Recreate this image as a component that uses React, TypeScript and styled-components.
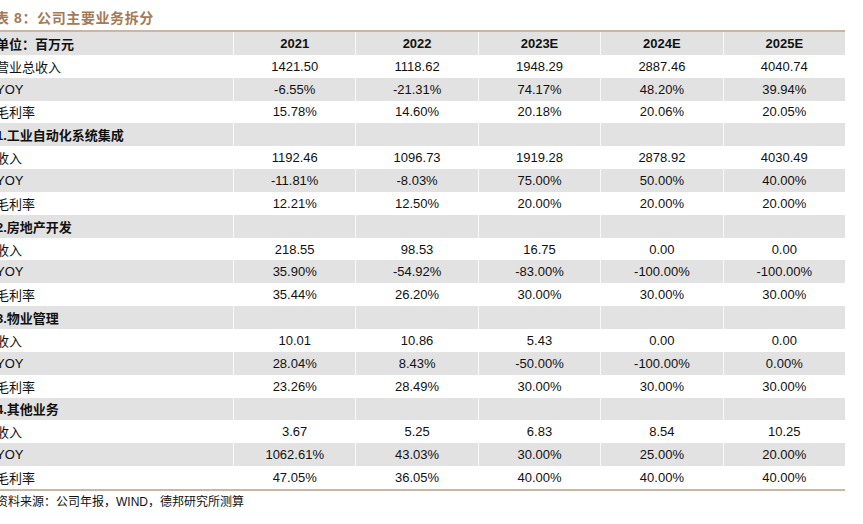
import React from "react";
import styled, { createGlobalStyle } from "styled-components";

const Global = createGlobalStyle`
  html, body { margin: 0; padding: 0; background: #ffffff; }
  body { width: 863px; height: 524px; overflow: hidden; }
`;

const CJK = `"Liberation Sans", "Noto Sans CJK SC", sans-serif`;

const Page = styled.div`
  width: 851px;
  margin-left: -6px;
  display: flex;
  flex-direction: column;
`;

const Title = styled.div`
  font-family: ${CJK};
  font-size: 14px;
  line-height: 16px;
  font-weight: 700;
  color: #a57a55;
  padding: 10px 0 0 1px;
  height: 20px;
  letter-spacing: 0.6px;
`;

const Table = styled.div`
  display: grid;
  grid-template-columns: 239px repeat(5, 1fr);
  border-top: 2px solid #cbb6a3;
  border-bottom: 2px solid #cbb6a3;
`;

const Row = styled.div<{ $shade: boolean }>`
  display: contents;
  & > div {
    background: ${(p) => (p.$shade ? "#e2e2e2" : "#ffffff")};
  }
`;

const Label = styled.div<{ $bold?: boolean }>`
  height: 22.85px;
  display: flex;
  align-items: center;
  padding-left: 2px;
  font-family: ${CJK};
  font-size: 13px;
  font-weight: ${(p) => (p.$bold ? 700 : 400)};
  color: #111;
  white-space: nowrap;
`;

const Cell = styled.div<{ $bold?: boolean }>`
  height: 22.85px;
  display: flex;
  align-items: center;
  justify-content: center;
  font-family: "Liberation Sans", Arial, sans-serif;
  font-size: 13px;
  font-weight: ${(p) => (p.$bold ? 700 : 400)};
  color: #111;
  border-left: 1px solid rgba(255, 255, 255, 0.8);
`;

const Source = styled.div`
  font-family: ${CJK};
  font-size: 12px;
  line-height: 16px;
  color: #111;
  padding: 3px 0 0 2px;
`;

type R = { label: string; values?: string[]; section?: boolean };

const rows: R[] = [
  { label: "营业总收入", values: ["1421.50", "1118.62", "1948.29", "2887.46", "4040.74"] },
  { label: "YOY", values: ["-6.55%", "-21.31%", "74.17%", "48.20%", "39.94%"] },
  { label: "毛利率", values: ["15.78%", "14.60%", "20.18%", "20.06%", "20.05%"] },
  { label: "1.工业自动化系统集成", section: true },
  { label: "收入", values: ["1192.46", "1096.73", "1919.28", "2878.92", "4030.49"] },
  { label: "YOY", values: ["-11.81%", "-8.03%", "75.00%", "50.00%", "40.00%"] },
  { label: "毛利率", values: ["12.21%", "12.50%", "20.00%", "20.00%", "20.00%"] },
  { label: "2.房地产开发", section: true },
  { label: "收入", values: ["218.55", "98.53", "16.75", "0.00", "0.00"] },
  { label: "YOY", values: ["35.90%", "-54.92%", "-83.00%", "-100.00%", "-100.00%"] },
  { label: "毛利率", values: ["35.44%", "26.20%", "30.00%", "30.00%", "30.00%"] },
  { label: "3.物业管理", section: true },
  { label: "收入", values: ["10.01", "10.86", "5.43", "0.00", "0.00"] },
  { label: "YOY", values: ["28.04%", "8.43%", "-50.00%", "-100.00%", "0.00%"] },
  { label: "毛利率", values: ["23.26%", "28.49%", "30.00%", "30.00%", "30.00%"] },
  { label: "4.其他业务", section: true },
  { label: "收入", values: ["3.67", "5.25", "6.83", "8.54", "10.25"] },
  { label: "YOY", values: ["1062.61%", "43.03%", "30.00%", "25.00%", "20.00%"] },
  { label: "毛利率", values: ["47.05%", "36.05%", "40.00%", "40.00%", "40.00%"] },
];

const years = ["2021", "2022", "2023E", "2024E", "2025E"];

export default function App() {
  return (
    <>
      <Global />
      <Page>
        <Title>表 8：公司主要业务拆分</Title>
        <Table>
          <Row $shade>
            <Label $bold>单位：百万元</Label>
            {years.map((y) => (
              <Cell key={y} $bold>
                {y}
              </Cell>
            ))}
          </Row>
          {rows.map((r, i) => (
            <Row key={i} $shade={(i + 1) % 2 === 0}>
              <Label $bold={r.section}>{r.label}</Label>
              {(r.values ?? ["", "", "", "", ""]).map((v, j) => (
                <Cell key={j}>{v}</Cell>
              ))}
            </Row>
          ))}
        </Table>
        <Source>资料来源：公司年报，WIND，德邦研究所测算</Source>
      </Page>
    </>
  );
}
